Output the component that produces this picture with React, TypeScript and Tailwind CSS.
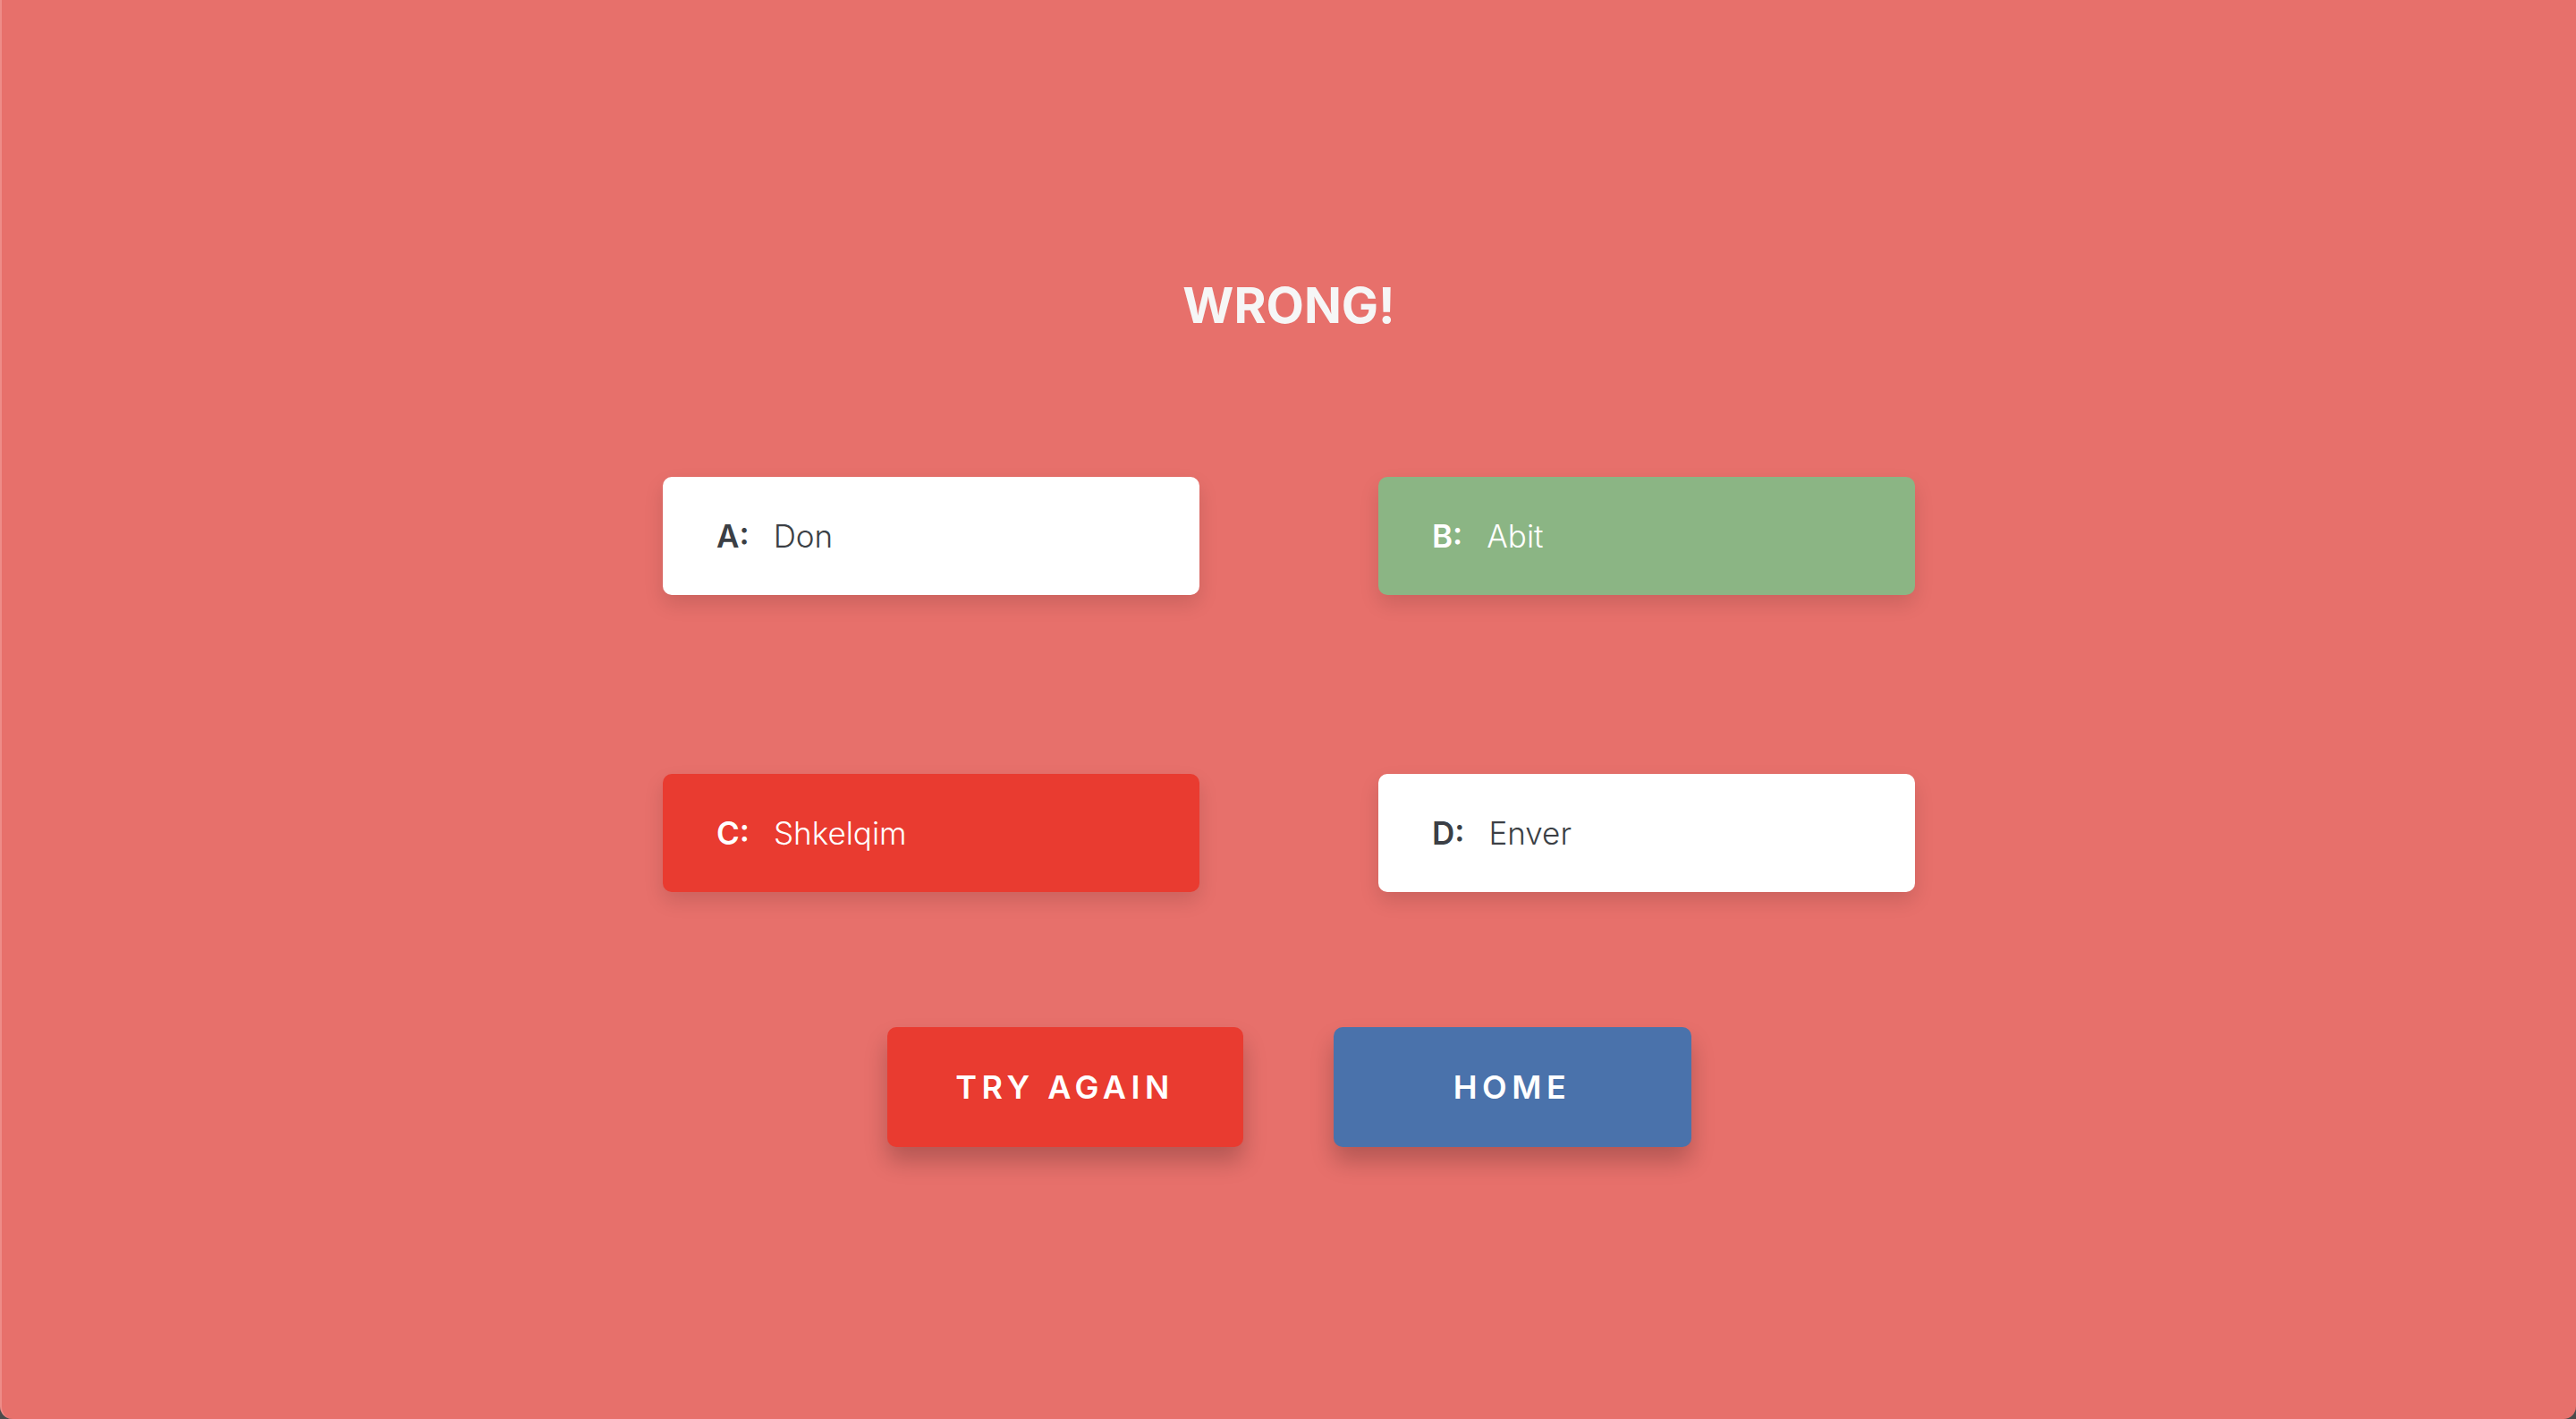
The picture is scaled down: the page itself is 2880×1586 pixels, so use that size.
const answers = [
  { key: "A", text: "Don", state: "idle" },
  { key: "B", text: "Abit", state: "correct" },
  { key: "C", text: "Shkelqim", state: "wrong" },
  { key: "D", text: "Enver", state: "idle" },
];

const cardStyles: Record<string, string> = {
  idle: "bg-white text-[#3b3f45]",
  correct: "bg-[#8bb584] text-white",
  wrong: "bg-[#e93b30] text-white",
};

export default function App() {
  return (
    <div className="w-full h-[1586px] bg-[#4b4b4b] font-['Inter',sans-serif]">
      <div className="h-full w-full bg-[#e7706b] rounded-b-[14px] border-l-2 border-[#ee8c88] flex flex-col items-center">
        <h1 className="pt-[314px] text-[55px] leading-none font-bold text-[#f6f6f6]">WRONG!</h1>

        <div className="mt-[164px] grid grid-cols-[600px_600px] gap-x-[200px] gap-y-[200px]">
          {answers.map((a) => (
            <div
              key={a.key}
              className={`h-[132px] rounded-[10px] flex items-center pl-[60px] gap-[27px] text-[35px] shadow-[0_10px_22px_rgba(0,0,0,0.12)] ${cardStyles[a.state]}`}
            >
              <span className="font-semibold">{a.key}:</span>
              <span className="font-light">{a.text}</span>
            </div>
          ))}
        </div>

        <div className="mt-[151px] flex gap-[101px]">
          <button className="w-[398px] h-[134px] rounded-[10px] bg-[#e93b30] text-white text-[36px] font-semibold tracking-[5.5px] shadow-[0_16px_26px_rgba(0,0,0,0.22)]">
            TRY AGAIN
          </button>
          <button className="w-[400px] h-[134px] rounded-[10px] bg-[#4a72ab] text-white text-[36px] font-semibold tracking-[5.5px] shadow-[0_16px_26px_rgba(0,0,0,0.22)]">
            HOME
          </button>
        </div>
      </div>
    </div>
  );
}
